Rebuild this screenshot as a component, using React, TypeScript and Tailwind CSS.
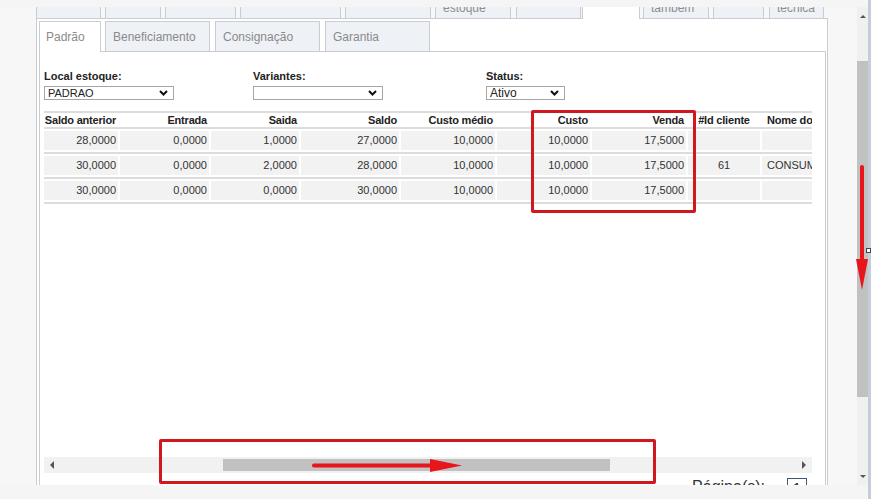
import React from 'react'

// --- abas superiores (cortadas pelo scroll) ---
const topTabs = [
  { w: 'w-[65px]', gap: 'w-[4px]' },
  { w: 'w-[56px]', gap: 'w-[4px]' },
  { w: 'w-[71px]', gap: 'w-[4px]' },
  { w: 'w-[101px]', gap: 'w-[4px]' },
  { w: 'w-[86px]', gap: 'w-[4px]' },
  { w: 'w-[76px]', gap: 'w-[5px]', label: 'estoque' },
  { w: 'w-[65px]', gap: 'w-[1px]' },
  { w: 'w-[58px]', gap: 'w-[3px]', active: true },
  { w: 'w-[66px]', gap: 'w-[4px]', label: 'também' },
  { w: 'w-[51px]', gap: 'w-[5px]' },
  { w: 'w-[55px]', gap: 'w-[4px]', label: 'técnica' },
]

const subTabs = [
  { label: 'Beneficiamento', gap: 'w-[4px]' },
  { label: 'Consignação', gap: 'w-[5px]' },
  { label: 'Garantia', gap: 'w-[5px]' },
]

const cols = [
  { w: 'w-[74px]', cls: 'justify-end pr-[2px]', head: 'Saldo anterior' },
  { w: 'w-[89px]', cls: 'justify-end pr-[2px]', head: 'Entrada' },
  { w: 'w-[88px]', cls: 'justify-end pr-[2px]', head: 'Saida' },
  { w: 'w-[98px]', cls: 'justify-end pr-[2px]', head: 'Saldo' },
  { w: 'w-[94px]', cls: 'justify-end pr-[2px]', head: 'Custo médio' },
  { w: 'w-[93px]', cls: 'justify-end pr-[2px]', head: 'Custo' },
  { w: 'w-[94px]', cls: 'justify-end pr-[2px]', head: 'Venda' },
  { w: 'w-[72px]', cls: 'justify-center', head: '#Id cliente' },
  { w: 'w-[110px]', cls: 'justify-start pl-[5px]', head: 'Nome do cliente' },
]

const rows = [
  ['28,0000', '0,0000', '1,0000', '27,0000', '10,0000', '10,0000', '17,5000', '', ''],
  ['30,0000', '0,0000', '2,0000', '28,0000', '10,0000', '10,0000', '17,5000', '61', 'CONSUMIDOR'],
  ['30,0000', '0,0000', '0,0000', '30,0000', '10,0000', '10,0000', '17,5000', '', ''],
]

const Chevron = () => (
  <svg width="9" height="6" viewBox="0 0 9 6" className="shrink-0">
    <path d="M1 1 L4.5 4.5 L8 1" fill="none" stroke="#111" strokeWidth="2" />
  </svg>
)

const Select = ({ w, value, text }: { w: string; value: string; text: string }) => (
  <div
    className={`${w} mt-[3px] flex h-[14px] items-center justify-between border border-[#a6a6a6] bg-white pl-[3px] pr-[5px] ${text} leading-none text-[#222]`}
  >
    <span>{value}</span>
    <Chevron />
  </div>
)

const App = () => {
  return (
    <div className="relative flex h-[499px] w-[871px] overflow-hidden bg-[#f5f5f5] font-['Liberation_Sans',Arial,sans-serif]">
      {/* área rolável */}
      <div className="flex w-[857px] flex-col pt-[7px]">
        <div className="h-[478px] overflow-hidden bg-[#f7f7f7] pl-[36px]">
          <div className="flex h-full w-[792px] flex-col">
            {/* abas de cima */}
            <div className="flex h-[12px] shrink-0">
              {topTabs.map((t, i) => (
                <React.Fragment key={i}>
                  <div
                    className={`${t.w} h-full overflow-hidden border-l border-r border-[#c9ccd1] ${
                      t.active ? 'bg-white' : 'border-b bg-[#eef1f6]'
                    }`}
                  >
                    {t.label && (
                      <div className="-mt-[6px] pl-[7px] text-[12px] leading-[14px] text-[#8d8d8d]">
                        {t.label}
                      </div>
                    )}
                  </div>
                  <div className={`${t.gap} h-full border-b border-[#c9ccd1]`} />
                </React.Fragment>
              ))}
            </div>

            {/* painel externo */}
            <div className="flex flex-1 flex-col border-l border-r border-[#c9ccd1] bg-white pl-[2px] pr-[1px] pt-[2px]">
              {/* abas Padrão / Beneficiamento ... */}
              <div className="flex h-[31px] shrink-0 text-[12px] text-[#8a8a8a]">
                <div className="flex w-[62px] items-center border-l border-r border-t border-[#c9ccd1] bg-white pl-[6px]">
                  Padrão
                </div>
                {subTabs.map((t) => (
                  <React.Fragment key={t.label}>
                    <div className={`${t.gap} border-b border-[#c9ccd1]`} />
                    <div className="flex w-[105px] items-center border border-[#c9ccd1] bg-[#eef1f6] pl-[7px]">
                      {t.label}
                    </div>
                  </React.Fragment>
                ))}
                <div className="flex-1 border-b border-[#c9ccd1]" />
              </div>

              {/* conteúdo */}
              <div className="flex flex-1 flex-col border-l border-r border-[#c9ccd1] pl-[4px] pt-[18px]">
                <div className="flex">
                  <div className="w-[209px]">
                    <div className="text-[11px] font-bold leading-[13px] text-[#222]">Local estoque:</div>
                    <Select w="w-[130px]" value="PADRAO" text="text-[11px]" />
                  </div>
                  <div className="w-[233px]">
                    <div className="text-[11px] font-bold leading-[13px] text-[#222]">Variantes:</div>
                    <Select w="w-[130px]" value="" text="text-[11px]" />
                  </div>
                  <div>
                    <div className="text-[11px] font-bold leading-[13px] text-[#222]">Status:</div>
                    <Select w="w-[79px]" value="Ativo" text="text-[12px]" />
                  </div>
                </div>

                {/* tabela */}
                <div className="mt-[11px] w-[768px] overflow-hidden">
                  <div className="flex h-[18px] w-max gap-[2px] border-b-2 border-t-2 border-[#dcdcdc] text-[11px] font-bold tracking-[-0.2px] text-[#222]">
                    {cols.map((c) => (
                      <div key={c.head} className={`${c.w} flex shrink-0 items-center whitespace-nowrap ${c.cls}`}>
                        {c.head}
                      </div>
                    ))}
                  </div>
                  {rows.map((r, i) => (
                    <div key={i} className="w-max border-b-2 border-[#dcdcdc] py-[2px]">
                      <div className="flex gap-[2px] text-[11px] text-[#333]">
                        {cols.map((c, j) => (
                          <div
                            key={j}
                            className={`${c.w} flex h-[19px] shrink-0 items-center overflow-hidden whitespace-nowrap bg-[#f2f2f2] ${c.cls}`}
                          >
                            {r[j]}
                          </div>
                        ))}
                      </div>
                    </div>
                  ))}
                </div>

                {/* barra de rolagem horizontal */}
                <div className="mt-[253px] flex h-[16px] w-[768px] items-center bg-[#f1f1f1]">
                  <div className="flex w-[16px] justify-center">
                    <div className="h-0 w-0 border-y-[4px] border-r-[4px] border-y-transparent border-r-[#555]" />
                  </div>
                  <div className="flex flex-1 items-center">
                    <div className="ml-[163px] h-[12px] w-[387px] bg-[#c1c1c1]" />
                  </div>
                  <div className="flex w-[16px] justify-center">
                    <div className="h-0 w-0 border-y-[4px] border-l-[4px] border-y-transparent border-l-[#555]" />
                  </div>
                </div>

                <div className="mt-[3px] flex w-[768px] items-start justify-end">
                  <span className="mt-[2px] text-[16px] leading-[18px] text-[#333]">Página(s):</span>
                  <div className="ml-[22px] mr-[5px] mt-[2px] flex h-[20px] w-[20px] items-start justify-center border border-[#3c5a7c] text-[15px] leading-[18px] text-[#222]">
                    1
                  </div>
                </div>
              </div>
            </div>
          </div>
        </div>
      </div>

      {/* barra de rolagem vertical */}
      <div className="mt-[7px] flex h-[478px] w-[11px] flex-col items-center bg-[#f0f0f0] pt-[8px]">
        <div className="h-0 w-0 border-x-[3px] border-b-[3px] border-x-transparent border-b-[#555]" />
        <div className="mt-[43px] h-[336px] w-full bg-[#c1c1c1]" />
        <div className="mb-[7px] mt-auto h-0 w-0 border-x-[3px] border-t-[3px] border-x-transparent border-t-[#555]" />
      </div>
      <div className="h-full w-[3px] bg-[#c5cddb]" />

      {/* marcações em vermelho */}
      <div className="absolute left-[531px] top-[110px] h-[103px] w-[165px] rounded-[2px] border-[3px] border-[#d0181e]" />
      <div className="absolute left-[159px] top-[439px] h-[45px] w-[497px] rounded-[2px] border-[3px] border-[#d0181e]" />
      <svg className="absolute left-[310px] top-[456px]" width="156" height="20" viewBox="0 0 156 20">
        <line x1="4" y1="9.5" x2="124" y2="9.5" stroke="#e8151b" strokeWidth="4" strokeLinecap="round" />
        <polygon points="120,3 152,9.5 120,16" fill="#e8151b" />
      </svg>
      <svg className="absolute left-[854px] top-[163px]" width="16" height="130" viewBox="0 0 16 130">
        <line x1="8" y1="4" x2="8" y2="100" stroke="#e8151b" strokeWidth="4" strokeLinecap="round" />
        <polygon points="2,96 14,96 8,127" fill="#e8151b" />
      </svg>
      <div className="absolute left-[866px] top-[248px] h-[5px] w-[5px] border border-[#444] bg-white" />
    </div>
  )
}

export default App
